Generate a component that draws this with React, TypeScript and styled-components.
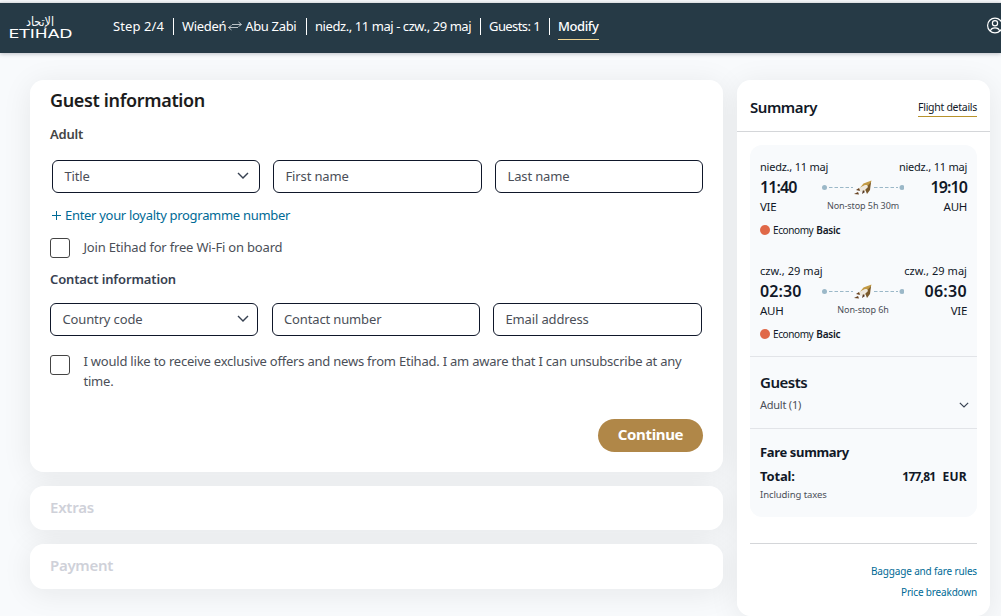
import * as React from 'react'
import styled, { createGlobalStyle } from 'styled-components'

const colors = {
  page: '#f8fafc',
  header: '#263a46',
  ink: '#111827',
  muted: '#4b4f58',
  border: '#0f172a',
  line: '#d4d6d9',
  link: '#006a96',
  gold: '#b08748',
  disabled: '#cfd1d9'
}

const GlobalStyle = createGlobalStyle`
  *,
  *::before {
    box-sizing: border-box;
  }

  body {
    margin: 0;
    height: 616px;
    overflow: hidden;
    background: ${colors.page};
    font-family: 'Noto Sans', 'Open Sans', sans-serif;
    color: ${colors.ink};
  }
`

interface TextProps {
  $size?: number
  $weight?: number
  $spacing?: number
  $color?: string
  $line?: number
}

const Text = styled.span<TextProps>`
  display: block;
  font-size: ${p => p.$size || 13}px;
  font-weight: ${p => p.$weight || 400};
  letter-spacing: ${p => p.$spacing || 0}px;
  line-height: ${p => p.$line || 20}px;
  color: ${p => p.$color || 'inherit'};
  white-space: nowrap;
`

const Header = styled.header`
  display: flex;
  align-items: center;
  height: 51px;
  margin-top: 2px;
  overflow: hidden;
  border-top: 1px solid #dfe1e4;
  background: ${colors.header};
  box-shadow: 0 1px 4px rgba(15, 23, 42, 0.25);
  color: #fff;
`

const Logo = styled.svg`
  flex: none;
  width: 66px;
  height: 30px;
  margin: 0 0 3px 8px;
  overflow: visible;
`

const Trip = styled.div`
  display: grid;
  flex: none;
  grid-template-columns: 60px 133px 174px 69px 50px;
  margin: -3px 0 0 39px;
`

const TripItem = styled.div`
  display: flex;
  align-items: center;
  height: 17px;
  padding: 0 0 1px 8px;
  border-left: 1px solid #fff;

  &:first-child {
    padding-left: 0;
    border-left: 0;
  }
`

const SwapIcon = styled.svg`
  flex: none;
  width: 14px;
  height: 10px;
  margin: 0 3px 0 2px;
`

const Modify = styled(Text)`
  height: 24px;
  margin-top: 4px;
  border-bottom: 1px solid #f1d592;
`

const UserIcon = styled.svg`
  flex: none;
  width: 16px;
  height: 18px;
  margin: -6px -2px 0 auto;
`

const Page = styled.main`
  display: flex;
  align-items: flex-start;
  gap: 14px;
  padding: 27px 11px 0 30px;
  position: relative;
  z-index: 0;
`

const Column = styled.div`
  display: flex;
  flex-direction: column;
  gap: 14px;
  width: 693px;
`

/* The shadow sits on a layer below, so it never darkens the card next to it. */
const Card = styled.section`
  position: relative;
  border-radius: 14px;
  background: #fff;

  &::before {
    content: '';
    position: absolute;
    inset: 0;
    z-index: -1;
    border-radius: 14px;
    box-shadow: 0 4px 30px rgba(20, 20, 20, 0.08);
  }
`

const FormCard = styled(Card)`
  height: 392px;
  padding: 10px 20px 0;
`

const StepCard = styled(Card)<{ $height: number }>`
  height: ${p => p.$height}px;
  padding: 11px 20px 0;
`

const Fields = styled.div<{ $columns: string; $gap: number; $indent?: number }>`
  display: grid;
  grid-template-columns: ${p => p.$columns};
  gap: ${p => p.$gap}px;
  margin-left: ${p => p.$indent || 0}px;
`

const FieldBox = styled.div<{ $end?: number }>`
  display: flex;
  align-items: center;
  justify-content: space-between;
  height: 33px;
  padding: 0 ${p => p.$end || 8}px 1px 11.5px;
  border: 1px solid ${colors.border};
  border-radius: 6px;
`

const Loyalty = styled.div`
  display: flex;
  align-items: center;
  gap: 4px;
  margin: 12px 0 12px 2px;
`

const CheckRow = styled.div<{ $top: number }>`
  display: flex;
  align-items: flex-start;
  gap: 13.5px;

  &::before {
    content: '';
    flex: none;
    width: 20px;
    height: 20px;
    margin-top: ${p => p.$top}px;
    border: 1px solid #444;
    border-radius: 3px;
  }
`

const SectionTitle = styled(Text)<{ $top: number; $bottom: number }>`
  margin: ${p => p.$top}px 0 ${p => p.$bottom}px;
`

const Actions = styled.div`
  display: flex;
  justify-content: flex-end;
  margin-top: 28px;
`

const Continue = styled.button`
  width: 105px;
  height: 33px;
  padding: 0 0 3px;
  border: 0;
  border-radius: 17px;
  background: ${colors.gold};
  color: #fff;
  font: 700 15px 'Noto Sans', sans-serif;
  letter-spacing: -0.35px;
`

const SummaryCard = styled(Card)`
  width: 253px;
  height: 536px;
`

const SummaryHead = styled.div`
  display: flex;
  align-items: center;
  justify-content: space-between;
  height: 52px;
  padding: 3px 13px 0;
  border-bottom: 1px solid ${colors.line};
`

const DetailsLink = styled(Text)`
  height: 20px;
  border-bottom: 1px solid #b8932c;
`

const Panel = styled.div`
  height: 372px;
  margin: 13px 13px 0;
  border-radius: 12px;
  background: ${colors.page};
`

const Flights = styled.div`
  display: flex;
  flex-direction: column;
  gap: 20px;
  height: 212px;
  padding: 12px 10px 0;
  border-bottom: 1px solid #e2e4e8;
`

const Flight = styled.div`
  height: 84px;
`

const FlightGrid = styled.div`
  display: grid;
  grid-template-columns: 62px 82px 63px;
  grid-template-rows: 20px 20px 20px;

  & > :nth-child(3n) {
    justify-self: end;
  }
`

const Route = styled.svg`
  width: 82px;
  height: 16px;
  align-self: center;
`

const Stop = styled(Text)`
  justify-self: center;
  width: max-content;
  margin-top: -1px;
`

const Cabin = styled.div`
  display: flex;
  align-items: center;
  gap: 3px;
  height: 20px;
  margin-top: 3px;

  &::before {
    content: '';
    width: 10px;
    height: 10px;
    border-radius: 50%;
    background: #e06848;
  }
`

const Guests = styled.div`
  height: 72px;
  padding: 15px 8px 0 10px;
  border-bottom: 1px solid #e2e4e8;
`

const Fare = styled.div`
  padding: 13px 10px 0;
`

const Split = styled.div<{ $top?: number }>`
  display: flex;
  align-items: center;
  justify-content: space-between;
  margin-top: ${p => p.$top || 0}px;
`

const Price = styled.div`
  display: flex;
  gap: 7px;
  margin-top: 2px;
`

const Links = styled.div`
  display: flex;
  flex-direction: column;
  align-items: flex-end;
  gap: 1px;
  margin: 26px 13px 0;
  padding-top: 17px;
  border-top: 1px solid ${colors.line};
`

const Chevron = ({ width = 12 }: { width?: number }) => (
  <svg width={width} height={width * 0.6} viewBox="0 0 12 7.2" fill="none">
    <path d="M1 1l5 5 5-5" stroke="#374151" strokeWidth="1.4" />
  </svg>
)

interface FieldProps {
  label: string
  select?: boolean
  end?: number
}

const Field = ({ label, select, end }: FieldProps) => (
  <FieldBox $end={end}>
    <Text $spacing={-0.14} $color={colors.muted}>
      {label}
    </Text>
    {select && <Chevron />}
  </FieldBox>
)

interface FlightItem {
  date: string
  from: string
  to: string
  depart: string
  arrive: string
  stop: string
  dateSpacing: number
  timeSpacing: number[]
}

const flights: FlightItem[] = [
  {
    date: 'niedz., 11 maj',
    from: 'VIE',
    to: 'AUH',
    depart: '11:40',
    arrive: '19:10',
    stop: 'Non-stop 5h 30m',
    dateSpacing: -0.23,
    timeSpacing: [-0.9, -0.9]
  },
  {
    date: 'czw., 29 maj',
    from: 'AUH',
    to: 'VIE',
    depart: '02:30',
    arrive: '06:30',
    stop: 'Non-stop 6h',
    dateSpacing: 0.05,
    timeSpacing: [0.1, 0.3]
  }
]

const FlightRow = ({ flight }: { flight: FlightItem }) => (
  <Flight>
    <FlightGrid>
      <Text $size={11} $spacing={flight.dateSpacing}>
        {flight.date}
      </Text>
      <span />
      <Text $size={11} $spacing={flight.dateSpacing}>
        {flight.date}
      </Text>
      <Text $size={16} $weight={600} $spacing={flight.timeSpacing[0]}>
        {flight.depart}
      </Text>
      <Route viewBox="0 0 82 16">
        <circle cx="2.5" cy="8.5" r="2.5" fill="#9bb8c8" />
        <circle cx="80" cy="8.5" r="2.5" fill="#9bb8c8" />
        <path
          d="M7 8.5h24M52 8.5h24"
          stroke="#9bb8c8"
          strokeWidth="1"
          strokeDasharray="3.5 2"
        />
        <path d="M49.5 1.5l-8 3-5 6 5 2 6-4z" fill="#c29a45" />
        <path d="M49 3l-1 8-3 4-2-5z" fill="#7a5a2c" />
        <path d="M43 6l-6 3 1 4 4-1 4-4-1-2z" fill="#eee8dd" />
        <path d="M37 9l-3 2 4 1zM36 13l-4 2 5 .5z" fill="#694423" />
        <path d="M41 11l-1 4 3-2z" fill="#533622" />
      </Route>
      <Text $size={16} $weight={600} $spacing={flight.timeSpacing[1]}>
        {flight.arrive}
      </Text>
      <Text $size={11.5} $spacing={-0.3}>
        {flight.from}
      </Text>
      <Stop $size={9} $spacing={-0.08} $color={colors.muted}>
        {flight.stop}
      </Stop>
      <Text $size={11.5} $spacing={-0.3}>
        {flight.to}
      </Text>
    </FlightGrid>
    <Cabin>
      <Text $size={10} $spacing={-0.4}>
        Economy
      </Text>
      <Text $size={10} $weight={600} $spacing={-0.25}>
        Basic
      </Text>
    </Cabin>
  </Flight>
)

const App = () => (
  <>
    <GlobalStyle />
    <Header>
      <Logo viewBox="0 0 66 30" fill="#fff">
        <text
          x="18"
          y="14"
          fontFamily="DejaVu Sans"
          fontSize="12.5"
          textLength="28"
          lengthAdjust="spacingAndGlyphs"
        >
          الإتحاد
        </text>
        <text
          x="0.5"
          y="26"
          fontFamily="DejaVu Sans"
          fontSize="11.5"
          textLength="64"
          lengthAdjust="spacingAndGlyphs"
        >
          ETIHAD
        </text>
      </Logo>
      <Trip>
        <TripItem>
          <Text $spacing={0.1}>Step 2/4</Text>
        </TripItem>
        <TripItem>
          <Text $spacing={-0.33}>Wiedeń</Text>
          <SwapIcon viewBox="0 0 14 10" fill="none" stroke="#b9c1c6">
            <path d="M4 3.5h9.500M10.500 1l3 2.500-3 2M10 6.500H.5M3.500 4.500l-3 2 3 2.500" />
          </SwapIcon>
          <Text $spacing={-0.33}>Abu Zabi</Text>
        </TripItem>
        <TripItem>
          <Text $spacing={-0.43}>niedz., 11 maj - czw., 29 maj</Text>
        </TripItem>
        <TripItem>
          <Text $spacing={-0.58}>Guests: 1</Text>
        </TripItem>
        <TripItem>
          <Modify $weight={500} $spacing={-0.4}>
            Modify
          </Modify>
        </TripItem>
      </Trip>
      <UserIcon viewBox="0 0 16 18" fill="none" stroke="#fff" strokeWidth="1.2">
        <circle cx="8" cy="9.5" r="7.4" />
        <circle cx="8" cy="7.3" r="2.6" />
        <path d="M3.4 14.9c.6-2.200 2.400-3 4.600-3s4 .8 4.600 3" />
      </UserIcon>
    </Header>
    <Page>
      <Column>
        <FormCard>
          <Text $size={18} $weight={600} $spacing={-0.35} $color="#1c1c1c">
            Guest information
          </Text>
          <SectionTitle
            $top={14}
            $bottom={16}
            $weight={600}
            $spacing={-0.2}
            $color="#444"
          >
            Adult
          </SectionTitle>
          <Fields $columns="208px 209px 208px" $gap={13} $indent={2}>
            <Field label="Title" select end={10} />
            <Field label="First name" />
            <Field label="Last name" />
          </Fields>
          <Loyalty>
            <svg width="9" height="9" viewBox="0 0 9 9" stroke={colors.link}>
              <path d="M4.5 0v9M0 4.5h9" />
            </svg>
            <Text $spacing={-0.3} $color={colors.link}>
              Enter your loyalty programme number
            </Text>
          </Loyalty>
          <CheckRow $top={1}>
            <Text $spacing={-0.19} $color={colors.muted}>
              Join Etihad for free Wi-Fi on board
            </Text>
          </CheckRow>
          <SectionTitle
            $top={11}
            $bottom={14}
            $weight={600}
            $spacing={-0.13}
            $color="#374151"
          >
            Contact information
          </SectionTitle>
          <Fields $columns="208px 208px 209px" $gap={13.5}>
            <Field label="Country code" select />
            <Field label="Contact number" />
            <Field label="Email address" />
          </Fields>
          <CheckRow $top={19}>
            <SectionTitle
              $top={15}
              $bottom={0}
              $spacing={-0.22}
              $color={colors.muted}
            >
              I would like to receive exclusive offers and news from Etihad. I
              am aware that I can unsubscribe at any
              <br />
              time.
            </SectionTitle>
          </CheckRow>
          <Actions>
            <Continue>Continue</Continue>
          </Actions>
        </FormCard>
        <StepCard $height={44}>
          <Text
            $size={15}
            $weight={600}
            $spacing={-0.2}
            $color={colors.disabled}
          >
            Extras
          </Text>
        </StepCard>
        <StepCard $height={45}>
          <Text
            $size={15}
            $weight={600}
            $spacing={-0.3}
            $color={colors.disabled}
          >
            Payment
          </Text>
        </StepCard>
      </Column>
      <SummaryCard>
        <SummaryHead>
          <Text $size={15} $weight={600} $spacing={-0.45}>
            Summary
          </Text>
          <DetailsLink $size={10.5} $spacing={-0.28}>
            Flight details
          </DetailsLink>
        </SummaryHead>
        <Panel>
          <Flights>
            {flights.map(flight => (
              <FlightRow key={flight.date} flight={flight} />
            ))}
          </Flights>
          <Guests>
            <Text $size={15} $weight={600} $spacing={-0.5}>
              Guests
            </Text>
            <Split $top={3}>
              <Text $size={11} $spacing={-0.24} $color={colors.muted}>
                Adult (1)
              </Text>
              <Chevron width={10} />
            </Split>
          </Guests>
          <Fare>
            <Text $weight={700} $spacing={-0.35}>
              Fare summary
            </Text>
            <Split $top={3}>
              <Text $weight={700} $spacing={-0.15}>
                Total:
              </Text>
              <Price>
                <Text $size={12} $weight={700} $spacing={-0.78}>
                  177,81
                </Text>
                <Text $size={12} $weight={700} $spacing={0.3}>
                  EUR
                </Text>
              </Price>
            </Split>
            <Text $size={9.5} $spacing={-0.08} $line={16} $color={colors.muted}>
              Including taxes
            </Text>
          </Fare>
        </Panel>
        <Links>
          <Text $size={10} $spacing={-0.16} $color={colors.link}>
            Baggage and fare rules
          </Text>
          <Text $size={10} $spacing={-0.17} $color={colors.link}>
            Price breakdown
          </Text>
        </Links>
      </SummaryCard>
    </Page>
  </>
)

export default App
